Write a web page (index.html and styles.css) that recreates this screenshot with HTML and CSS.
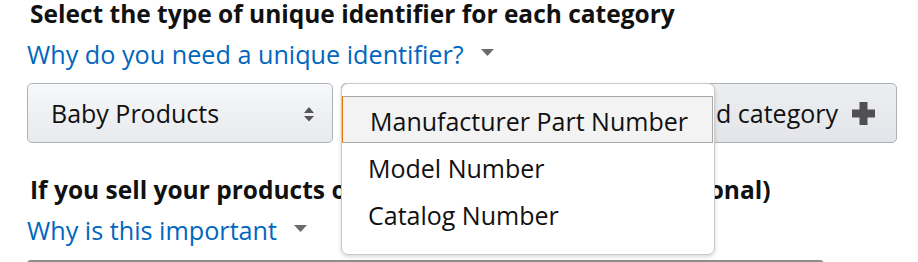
FILE: index.html
```html
<!DOCTYPE html>
<html lang="en">
<head>
<meta charset="utf-8">
<title>Unique identifier</title>
<link rel="stylesheet" href="styles.css">
</head>
<body>
<div class="page">
  <h2 class="heading">Select the type of unique identifier for each category</h2>
  <a class="help-link" href="#">Why do you need a unique identifier?<svg class="caret" width="13" height="7" viewBox="0 0 13 7"><polygon points="0,0 13,0 6.5,7" fill="#6b6b6b"/></svg></a>

  <div class="row">
    <div class="select select-category">
      <span>Baby Products</span>
      <svg class="updown" width="10" height="15" viewBox="0 0 10 15"><polygon points="0,6 5,0 10,6" fill="#555"/><polygon points="0,9 10,9 5,14.5" fill="#555"/></svg>
    </div>
    <div class="select select-type"></div>
    <button class="add-btn" type="button">
      <span>Add category</span>
      <svg class="plus" width="23" height="23" viewBox="0 0 23 23"><rect x="7.5" y="0" width="8" height="23" fill="#505050"/><rect x="0" y="7.5" width="23" height="8" fill="#505050"/></svg>
    </button>

    <ul class="menu">
      <li class="menu-item active">Manufacturer Part Number</li>
      <li class="menu-item">Model Number</li>
      <li class="menu-item">Catalog Number</li>
    </ul>
  </div>

  <h2 class="heading heading-second">If you sell your products on other web sites, tell us (optional)</h2>
  <a class="help-link" href="#">Why is this important<svg class="caret" width="13" height="7" viewBox="0 0 13 7"><polygon points="0,0 13,0 6.5,7" fill="#6b6b6b"/></svg></a>

  <div class="input-box"></div>
</div>
</body>
</html>
```
FILE: styles.css
```css
* { box-sizing: border-box; }

html, body {
  margin: 0;
  padding: 0;
  background: #ffffff;
  overflow: hidden;
}

body {
  font-family: "Open Sans", "Noto Sans", "Liberation Sans", sans-serif;
  color: #111111;
}

.page {
  padding: 0 0 0 27px;
  width: 918px;
  height: 262px;
}

.heading {
  margin: 0;
  padding-left: 3px;
  font-size: 24.5px;
  font-weight: 700;
  line-height: 28px;
  color: #111111;
  white-space: nowrap;
}

.help-link {
  display: flex;
  align-items: center;
  margin-top: 12px;
  font-size: 25.2px;
  line-height: 28px;
  color: #0066c0;
  text-decoration: none;
  white-space: nowrap;
}

.caret {
  margin-left: 17px;
  margin-top: -4px;
}

.row {
  position: relative;
  display: flex;
  gap: 8px;
  margin-top: 15px;
  height: 60px;
}

.select {
  display: flex;
  align-items: center;
  height: 60px;
  border: 1px solid #adb1b8;
  border-radius: 5px;
  background: linear-gradient(#f7f8fa, #e7e9ec);
  box-shadow: 0 1px 0 rgba(255,255,255,.6) inset;
  font-size: 25px;
  color: #111111;
}

.select-category {
  width: 306px;
  padding: 0 18px 0 23px;
  justify-content: space-between;
}

.select-type {
  width: 299px;
}

.updown { margin-top: 2px; }

.add-btn {
  display: flex;
  align-items: center;
  justify-content: flex-end;
  gap: 14px;
  width: 249px;
  height: 60px;
  padding: 0 21px 0 0;
  border: 1px solid #adb1b8;
  border-radius: 5px;
  background: linear-gradient(#eceef1, #e3e5ea);
  font-family: inherit;
  font-size: 25px;
  color: #111111;
}

.plus { margin-top: 1px; }

.menu {
  position: absolute;
  left: 314px;
  top: 0;
  width: 374px;
  height: 172px;
  margin: 0;
  padding: 12px 0 0 0;
  list-style: none;
  background: #ffffff;
  border: 1px solid #c9c9c9;
  border-radius: 7px;
  box-shadow: 0 2px 4px rgba(0,0,0,.15);
}

.menu-item {
  height: 47px;
  display: flex;
  align-items: center;
  padding-left: 26px;
  padding-top: 3px;
  margin-right: 1px;
  font-size: 25px;
  color: #111111;
  white-space: nowrap;
}

.menu-item.active {
  background: #f3f3f3;
  border-top: 1px solid #a8a8a8;
  border-bottom: 1px solid #a8a8a8;
  border-right: 1px solid #a8a8a8;
  border-left: 1px solid #e77600;
  padding-left: 27px;
  padding-top: 2px;
}

.heading-second {
  margin-top: 33px;
}

.help-link + .input-box { margin-top: 16px; }

.input-box {
  width: 797px;
  height: 40px;
  border: 1px solid #a6a6a6;
  border-top: 3px solid #8c8c8c;
  border-radius: 4px;
}
```
